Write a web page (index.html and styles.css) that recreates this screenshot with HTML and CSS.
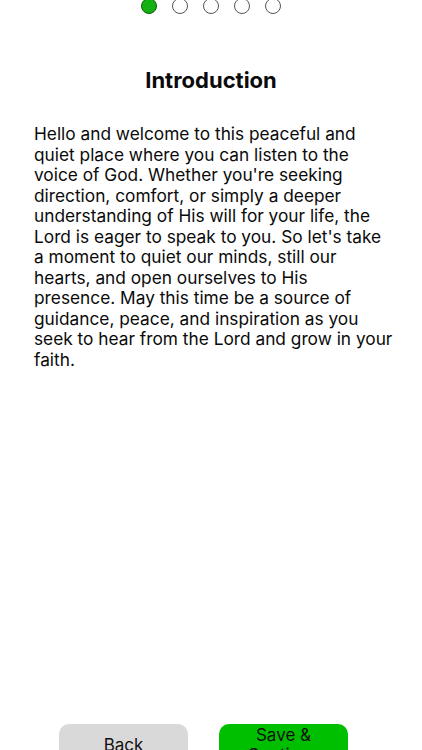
FILE: index.html
```html
<!DOCTYPE html>
<html lang="en">
<head>
    <meta charset="UTF-8">
    <meta name="viewport" content="width=device-width, initial-scale=1.0">
    <title>Introduction</title>
    <link rel="stylesheet" href="styles.css">
</head>
<body>
    <div class="page">
        <!-- Step indicator -->
        <div class="steps">
            <span class="dot active"></span>
            <span class="dot"></span>
            <span class="dot"></span>
            <span class="dot"></span>
            <span class="dot"></span>
        </div>

        <h2 class="title">Introduction</h2>

        <p class="intro">Hello and welcome to this peaceful and quiet place where you can listen to the voice of God. Whether you're seeking direction, comfort, or simply a deeper understanding of His will for your life, the Lord is eager to speak to you. So let's take a moment to quiet our minds, still our hearts, and open ourselves to His presence. May this time be a source of guidance, peace, and inspiration as you seek to hear from the Lord and grow in your faith.</p>

        <!-- Navigation buttons -->
        <div class="actions">
            <button class="btn back">Back</button>
            <button class="btn save">Save &amp; Continue</button>
        </div>
    </div>
</body>
</html>
```

FILE: styles.css
```css
body {
    font-family: Inter, "Noto Sans", sans-serif;
    margin: 0;
    padding: 0;
    background-color: #ffffff;
    color: #0a0a0a;
}
.page {
    display: flex;
    flex-direction: column;
    min-height: 780px;
}
.steps {
    display: flex;
    justify-content: center;
    gap: 15px;
    margin-top: -2px;
}
.dot {
    width: 14px;
    height: 14px;
    border: 1.5px solid #555;
    border-radius: 50%;
    background: #fff;
}
.dot.active {
    background-color: #14b014;
    border-color: #0b5e0b;
}
.title {
    text-align: center;
    font-size: 22px;
    font-weight: 700;
    margin: 53px 0 0;
}
.intro {
    font-size: 17.3px;
    line-height: 20.5px;
    margin: 31px 0 0;
    padding: 0 29px 0 34px;
}
.actions {
    margin-top: auto;
    display: flex;
    justify-content: center;
    gap: 31px;
    padding: 0 74px 14px 59px;
}
.btn {
    width: 130px;
    height: 42px;
    border: none;
    border-radius: 10px;
    font-family: Inter, "Noto Sans", sans-serif;
    font-size: 17px;
    line-height: 20px;
    color: #111;
    padding: 0 20px;
}
.back {
    background-color: #d9d9d9;
}
.save {
    background-color: #00bf00;
}
```
